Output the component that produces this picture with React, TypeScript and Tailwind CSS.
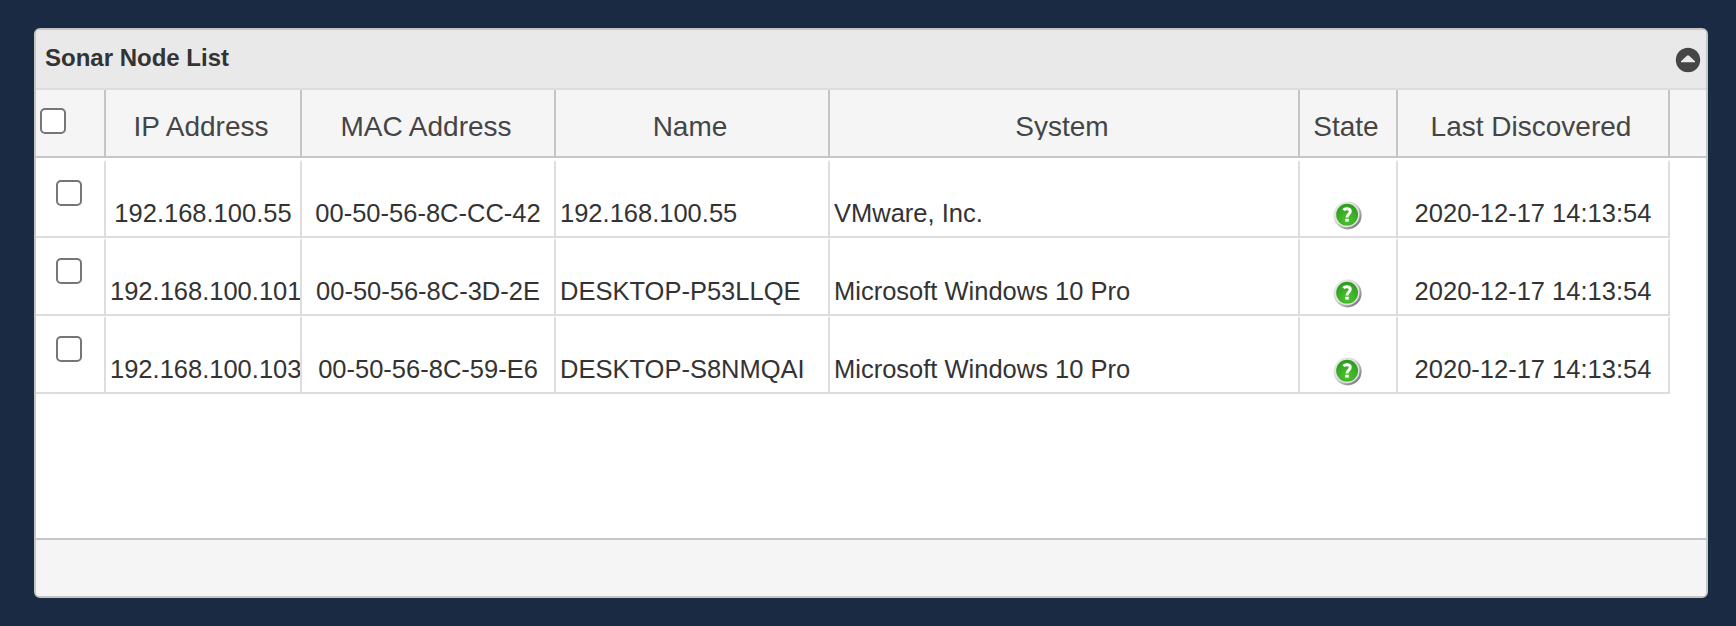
import { ReactNode } from "react";

const COLUMNS = "grid grid-cols-[70px_196px_254px_274px_470px_98px_272px]";

type Node = { ip: string; mac: string; name: string; system: string; seen: string };

const nodes: Node[] = [
  { ip: "192.168.100.55", mac: "00-50-56-8C-CC-42", name: "192.168.100.55", system: "VMware, Inc.", seen: "2020-12-17 14:13:54" },
  { ip: "192.168.100.101", mac: "00-50-56-8C-3D-2E", name: "DESKTOP-P53LLQE", system: "Microsoft Windows 10 Pro", seen: "2020-12-17 14:13:54" },
  { ip: "192.168.100.103", mac: "00-50-56-8C-59-E6", name: "DESKTOP-S8NMQAI", system: "Microsoft Windows 10 Pro", seen: "2020-12-17 14:13:54" },
];

const headings = ["IP Address", "MAC Address", "Name", "System", "State", "Last Discovered"];

function Checkbox({ label }: { label: string }) {
  return (
    <input
      type="checkbox"
      aria-label={label}
      className="block size-[26px] appearance-none rounded-[5px] border-2 border-[#767676] bg-white checked:bg-[#0075ff]"
    />
  );
}

function CollapseIcon() {
  return (
    <svg viewBox="0 0 26 26" className="size-[26px]" aria-hidden="true">
      <circle cx="13" cy="13" r="12.2" fill="#464646" />
      <path d="M12.2 8.6 H13.8 L20 14.2 V15.2 H6 V14.2 Z" fill="#e9e9e9" />
    </svg>
  );
}

function StateIcon() {
  return (
    <svg viewBox="0 0 32 32" className="size-8" aria-hidden="true">
      <defs>
        <linearGradient id="rim" x1="0.1" y1="0.1" x2="0.9" y2="0.9">
          <stop offset="0" stopColor="#eeeeee" />
          <stop offset="0.5" stopColor="#c9c8ca" />
          <stop offset="1" stopColor="#77747a" />
        </linearGradient>
        <radialGradient id="glass" cx="0.5" cy="0.75" r="0.7">
          <stop offset="0" stopColor="#4cc52c" />
          <stop offset="1" stopColor="#2f9d22" />
        </radialGradient>
        <filter id="soft" x="-20%" y="-20%" width="140%" height="140%">
          <feGaussianBlur stdDeviation="0.7" />
        </filter>
      </defs>
      <circle cx="15.6" cy="16.4" r="14" fill="url(#rim)" filter="url(#soft)" />
      <circle cx="15" cy="15.7" r="12.5" fill="#e4e4e4" />
      <circle cx="15.1" cy="15.7" r="10.9" fill="url(#glass)" />
      <path d="M11.4 11.2 C13 9.2 18.3 8.9 18.3 12.6 C18.3 15.2 15 15 15 18.4" fill="none" stroke="#fff" strokeWidth="2.9" />
      <rect x="13.3" y="19.8" width="3.5" height="2.8" fill="#fff" />
    </svg>
  );
}

function Cell({ children, center }: { children: ReactNode; center?: boolean }) {
  return (
    <div className="h-[78px] overflow-hidden border-t-2 border-r-2 border-b-2 border-t-white border-r-[#dddddd] border-b-[#dddddd] px-1 pt-[35px]">
      <div className={center ? "text-center leading-[32px] whitespace-nowrap" : "text-left leading-[32px] whitespace-nowrap"}>
        {children}
      </div>
    </div>
  );
}

export default function App() {
  return (
    <div className="h-[626px] w-[1736px] bg-[#1a2a42] pt-7 pl-[34px] font-['Liberation_Sans',Arial,sans-serif] text-[25.5px] text-[#333333]">
      <section className="flex h-[570px] w-[1674px] flex-col overflow-hidden rounded-[6px] border-2 border-[#c5c5c5] bg-white">
        <header className="flex h-[60px] shrink-0 items-start justify-between border-b-2 border-[#dddddd] bg-[#e9e9e9] pr-[5px] pl-[9px]">
          <h1 className="pt-[13px] text-[24px] leading-[30px] font-bold">Sonar Node List</h1>
          <div className="pt-[17px]">
            <CollapseIcon />
          </div>
        </header>
        <div className="h-[68px] shrink-0 border-b-2 border-[#c5c5c5] bg-[#f5f5f5]">
          <div className={COLUMNS}>
            <div className="h-[66px] border-r-2 border-[#c5c5c5] pt-[18px] pl-1">
              <Checkbox label="Select all" />
            </div>
            {headings.map((h) => (
              <div key={h} className="h-[66px] border-r-2 border-[#c5c5c5] pt-[21px] pr-1">
                <div className="h-[29px] overflow-hidden text-center text-[28px] leading-[32px] whitespace-nowrap text-[#454545]">{h}</div>
              </div>
            ))}
          </div>
        </div>
        <div className="flex-1 pt-0.5">
          {nodes.map((n) => (
            <div key={n.ip} className={COLUMNS}>
              <div className="h-[78px] border-t-2 border-r-2 border-b-2 border-t-white border-r-[#dddddd] border-b-[#dddddd] pt-[18px] pl-5">
                <Checkbox label={n.ip} />
              </div>
              <Cell center>{n.ip}</Cell>
              <Cell center>{n.mac}</Cell>
              <Cell>{n.name}</Cell>
              <Cell>{n.system}</Cell>
              <Cell center>
                <div className="flex justify-center pt-0.5">
                  <StateIcon />
                </div>
              </Cell>
              <Cell center>{n.seen}</Cell>
            </div>
          ))}
        </div>
        <footer className="h-[58px] shrink-0 border-t-2 border-[#c5c5c5] bg-[#f5f5f5]" />
      </section>
    </div>
  );
}
